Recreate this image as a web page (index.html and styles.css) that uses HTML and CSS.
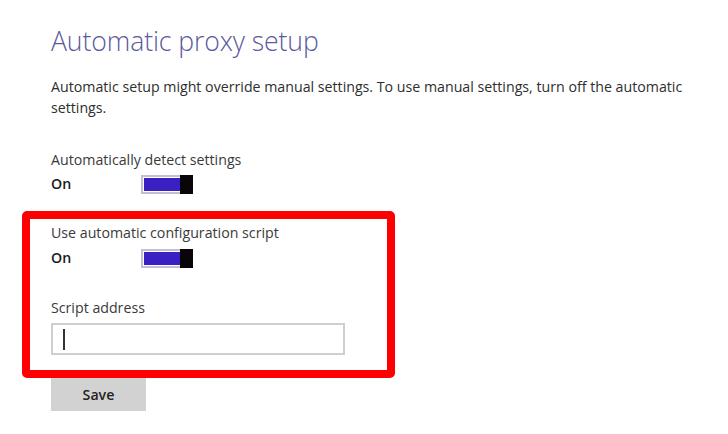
FILE: index.html
```html
<!DOCTYPE html>
<html>
<head>
<meta charset="utf-8">
<link rel="stylesheet" href="styles.css">
</head>
<body>
<main class="page">
  <h1 class="title">Automatic proxy setup</h1>
  <p class="desc">Automatic setup might override manual settings. To use manual settings, turn off the automatic settings.</p>

  <div class="group">
    <div class="label">Automatically detect settings</div>
    <div class="row">
      <span class="state">On</span>
      <span class="toggle"><span class="track"></span><span class="thumb"></span></span>
    </div>
  </div>

  <section class="highlight">
    <div class="label">Use automatic configuration script</div>
    <div class="row">
      <span class="state">On</span>
      <span class="toggle"><span class="track"></span><span class="thumb"></span></span>
    </div>
    <div class="label label-addr">Script address</div>
    <div class="input"><span class="caret"></span></div>
  </section>

  <button class="save">Save</button>
</main>
</body>
</html>
```

FILE: styles.css
```css
* { box-sizing: border-box; }
html, body { margin: 0; padding: 0; background: #ffffff; }
body {
  font-family: "Open Sans", "Noto Sans", sans-serif;
  color: #333333;
  width: 728px;
  height: 434px;
  overflow: hidden;
}
.page {
  padding: 23px 0 0 51px;
}
.title {
  margin: 0;
  font-size: 26.6px;
  line-height: 36px;
  font-weight: 300;
  color: #5a5a9c;
  letter-spacing: -0.1px;
}
.desc {
  margin: 17px 0 0 0;
  font-size: 14.2px;
  line-height: 21px;
  width: 650px;
  color: #2e2e2e;
}
.group { margin-top: 32px; }
.label {
  font-size: 14.2px;
  line-height: 20px;
  color: #3a3a3a;
}
.row {
  display: flex;
  align-items: flex-start;
  margin-top: 4px;
  height: 20px;
}
.state {
  width: 90px;
  font-size: 14.2px;
  line-height: 20px;
  font-weight: 600;
  color: #1a1a1a;
}
.toggle {
  display: flex;
  width: 52px;
  height: 19px;
  margin-top: 1px;
  border: 2px solid #c4c0d4;
  border-right: none;
  background: #fff;
}
.track {
  flex: 1;
  background: #3a1fc2;
  margin: 1px 0 1px 1px;
}
.thumb {
  width: 13px;
  margin-top: -2px;
  margin-bottom: -2px;
  background: #0a0508;
}
.highlight {
  margin: 17px 0 0 -29px;
  width: 373px;
  border: 8px solid #ff0000;
  border-radius: 5px;
  padding: 4px 0 15px 21px;
}
.highlight .row { margin-top: 5px; }
.label-addr { margin-top: 30px; }
.input {
  margin-top: 5px;
  width: 294px;
  height: 32px;
  border: 2px solid #cfcfcf;
  padding: 4px 0 0 10px;
}
.caret {
  display: block;
  width: 2px;
  height: 21px;
  background: #333;
}
.save {
  display: block;
  margin: 0;
  width: 95px;
  height: 33px;
  border: none;
  background: #d2d2d2;
  font-family: "Open Sans", "Noto Sans", sans-serif;
  font-size: 14.2px;
  font-weight: 600;
  color: #222;
  padding: 0;
}
```
